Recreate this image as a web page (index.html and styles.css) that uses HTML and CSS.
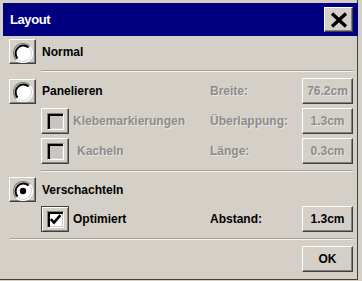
FILE: index.html
```html
<!DOCTYPE html>
<html lang="de">
<head>
<meta charset="utf-8">
<title>Layout</title>
<link rel="stylesheet" href="styles.css">
</head>
<body>
<div class="window">
  <div class="titlebar">
    <span class="title">Layout</span>
    <span class="close">
      <svg width="18" height="16" viewBox="0 0 18 16"><path d="M2 1.5L16 14.5M16 1.5L2 14.5" stroke="#000" stroke-width="3.4" fill="none"/></svg>
    </span>
  </div>

  <div class="row row-normal">
    <span class="radio-btn">
      <svg width="20" height="20" viewBox="0 0 20 20"><circle cx="10" cy="10" r="8" fill="#fff"/><path d="M3.28 16.72A9.5 9.5 0 0 1 16.72 3.28" stroke="#808080" stroke-width="1.2" fill="none"/><path d="M4.5 15.5A7.8 7.8 0 0 1 15.5 4.5" stroke="#000" stroke-width="2" fill="none"/><path d="M16.72 3.28A9.5 9.5 0 0 1 3.28 16.72" stroke="#fff" stroke-width="1.2" fill="none"/></svg>
    </span>
    <span class="label">Normal</span>
  </div>
  <div class="sep"></div>

  <div class="row row-pan">
    <span class="radio-btn">
      <svg width="20" height="20" viewBox="0 0 20 20"><circle cx="10" cy="10" r="8" fill="#fff"/><path d="M3.28 16.72A9.5 9.5 0 0 1 16.72 3.28" stroke="#808080" stroke-width="1.2" fill="none"/><path d="M4.5 15.5A7.8 7.8 0 0 1 15.5 4.5" stroke="#000" stroke-width="2" fill="none"/><path d="M16.72 3.28A9.5 9.5 0 0 1 3.28 16.72" stroke="#fff" stroke-width="1.2" fill="none"/></svg>
    </span>
    <span class="label">Panelieren</span>
    <div class="param">
      <span class="plabel disabled">Breite:</span>
      <span class="field disabled">76.2cm</span>
    </div>
  </div>

  <div class="row sub row-gap">
    <span class="check-btn"><span class="check check-off"></span></span>
    <span class="label label-sub disabled">Klebemarkierungen</span>
    <div class="param">
      <span class="plabel disabled">Überlappung:</span>
      <span class="field disabled">1.3cm</span>
    </div>
  </div>

  <div class="row sub row-gap">
    <span class="check-btn"><span class="check check-off"></span></span>
    <span class="label label-sub label-wide disabled">Kacheln</span>
    <div class="param">
      <span class="plabel disabled">Länge:</span>
      <span class="field disabled">0.3cm</span>
    </div>
  </div>
  <div class="sep"></div>

  <div class="row row-nest">
    <span class="radio-btn">
      <svg width="20" height="20" viewBox="0 0 20 20"><circle cx="10" cy="10" r="8" fill="#fff"/><path d="M3.28 16.72A9.5 9.5 0 0 1 16.72 3.28" stroke="#808080" stroke-width="1.2" fill="none"/><path d="M4.5 15.5A7.8 7.8 0 0 1 15.5 4.5" stroke="#000" stroke-width="2" fill="none"/><path d="M16.72 3.28A9.5 9.5 0 0 1 3.28 16.72" stroke="#fff" stroke-width="1.2" fill="none"/><circle cx="10" cy="10" r="3.2" fill="#000"/></svg>
    </span>
    <span class="label">Verschachteln</span>
  </div>

  <div class="row sub row-gap">
    <span class="check-btn check-btn-focus"><span class="check check-on">
      <svg width="13" height="13" viewBox="0 0 13 13"><path d="M1.8 6.2L5 9.6L11.4 2.2" stroke="#000" stroke-width="2.6" fill="none"/></svg>
    </span></span>
    <span class="label label-sub">Optimiert</span>
    <div class="param">
      <span class="plabel">Abstand:</span>
      <span class="field">1.3cm</span>
    </div>
  </div>
  <div class="sep sep-full"></div>

  <div class="row row-ok">
    <span class="field ok">OK</span>
  </div>
</div>
</body>
</html>
```

FILE: styles.css
```css
body {
  margin: 0;
}

.window {
  width: 362px;
  height: 281px;
  box-sizing: border-box;
  padding-top: 3px;
  background: #d4d0c8;
  font: bold 12px "Liberation Sans", Arial, sans-serif;
  color: #000;
  overflow: hidden;
  box-shadow: inset -4px -1px 0 #d4d0c8, inset -5px -2px 0 #404040;
}

.titlebar {
  margin: 0 4px 0 3px;
  height: 33px;
  box-sizing: border-box;
  padding: 0 5px 0 7px;
  background: #000080;
  display: flex;
  align-items: center;
  justify-content: space-between;
}

.title {
  color: #fff;
  font-size: 13px;
  letter-spacing: -0.4px;
}

.close {
  width: 29px;
  height: 25px;
  box-sizing: border-box;
  background: #d4d0c8;
  border: 1px solid;
  border-color: #fff #404040 #404040 #fff;
  box-shadow: inset -1px -1px 0 #808080;
  display: flex;
  align-items: center;
  justify-content: center;
}

.row {
  display: flex;
  align-items: center;
  height: 26px;
  padding: 0 9px;
}

.row.sub {
  padding-left: 41px;
}

.row-normal {
  margin-top: 3px;
  height: 25px;
}

.row-pan {
  margin-top: 6px;
}

.row-gap {
  margin-top: 4px;
}

.row-nest {
  margin-top: 5px;
  height: 25px;
}

.row-ok {
  margin-top: 6px;
  justify-content: flex-end;
}

.sep {
  margin: 6px 9px 0 41px;
  border-top: 1px solid #a29e97;
  border-bottom: 1px solid #f4f3f0;
}

.sep-full {
  margin-left: 10px;
}

.radio-btn {
  width: 27px;
  height: 25px;
  box-sizing: border-box;
  border: 1px solid;
  border-color: #fff #404040 #404040 #fff;
  box-shadow: inset -1px -1px 0 #808080;
  display: flex;
  align-items: center;
  justify-content: center;
  padding-top: 2px;
  flex: none;
}

.label {
  margin-left: 6px;
}

.label-sub {
  margin-left: 4px;
}

.label-wide {
  margin-left: 8px;
}

.disabled {
  color: #8c8c8c;
  text-shadow: 1px 1px 0 rgba(255, 255, 255, 0.45);
}

.check-btn {
  width: 28px;
  height: 26px;
  box-sizing: border-box;
  border: 1px solid;
  border-color: #fff #404040 #404040 #fff;
  box-shadow: inset -1px -1px 0 #808080;
  display: flex;
  align-items: center;
  justify-content: center;
  flex: none;
}

.check-btn-focus {
  border-color: #404040;
  box-shadow: inset 1px 1px 0 #fff, inset -1px -1px 0 #808080;
}

.check {
  width: 17px;
  height: 17px;
  box-sizing: border-box;
  border: 1px solid;
  border-color: #808080 #fff #fff #808080;
  box-shadow: inset 2px 2px 0 #000, inset -1px -1px 0 #d4d0c8;
  display: flex;
  align-items: center;
  justify-content: center;
}

.check-off {
  background: #c8c5bf;
}

.check-on {
  background: #fff;
  padding: 1px 0 0 1px;
}

.param {
  margin-left: auto;
  width: 143px;
  display: flex;
  align-items: center;
}

.plabel {
  flex: 1;
}

.field {
  width: 51px;
  height: 26px;
  box-sizing: border-box;
  border: 1px solid;
  border-color: #fff #404040 #404040 #fff;
  box-shadow: inset -1px -1px 0 #808080;
  display: flex;
  align-items: center;
  justify-content: center;
  flex: none;
}

.ok {
  color: #000;
}
```
